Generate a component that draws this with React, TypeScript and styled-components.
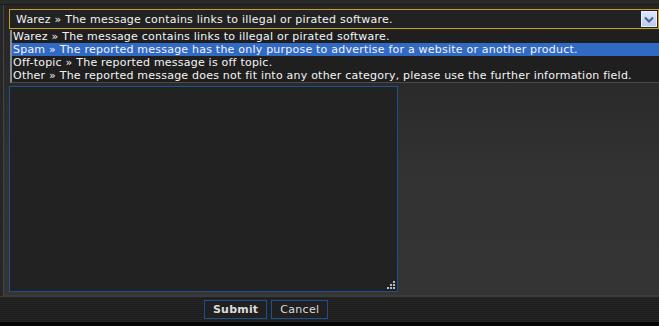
import React, { useState } from 'react';
import styled, { createGlobalStyle } from 'styled-components';

const GlobalStyle = createGlobalStyle`
  html, body {
    margin: 0;
    padding: 0;
    background: #000;
  }
  body {
    font-family: "DejaVu Sans", Verdana, sans-serif;
  }
`;

const Page = styled.div`
  width: 659px;
  height: 326px;
  display: flex;
  flex-direction: column;
  background: #000;
  overflow: hidden;
`;

const TopStrip = styled.div`
  height: 4px;
  background: #2a2a2a;
  border-bottom: 1px solid #1b1b1b;
`;

const Body = styled.div`
  flex: 1;
  display: flex;
  min-height: 0;
`;

const LeftRail = styled.div`
  width: 3px;
  background: #262626;
  border-right: 1px solid #444;
`;

const Panel = styled.div`
  flex: 1;
  position: relative;
  padding: 4px 0 0 5px;
  background: linear-gradient(180deg, #252525 0%, #2b2b2b 30%, #333 60%, #343434 100%);
  border-bottom: 1px solid #3c3c3c;
`;

const SelectBox = styled.div`
  width: 648px;
  height: 18px;
  border: 1px solid #c9a01e;
  background: #222;
  display: flex;
  align-items: center;
  justify-content: space-between;
  box-sizing: content-box;
`;

const SelectText = styled.span`
  padding-left: 6px;
  font-size: 11px;
  letter-spacing: 0.22px;
  color: #f2f2f2;
  white-space: nowrap;
`;

const ArrowButton = styled.div`
  width: 14px;
  height: 14px;
  margin-right: 1px;
  border: 1px solid #e8eefc;
  background: linear-gradient(180deg, #dfe8fb 0%, #b9cbf3 100%);
  display: flex;
  align-items: center;
  justify-content: center;
`;

const ListBox = styled.ul`
  position: absolute;
  left: 6px;
  top: 25px;
  right: 0;
  margin: 0;
  padding: 0;
  list-style: none;
  background: #1f1f1f;
  border-left: 2px solid #8a8a8a;
  border-bottom: 1px solid #4a4a4a;
  z-index: 2;
`;

const Option = styled.li<{ $active: boolean }>`
  height: 13px;
  line-height: 13px;
  padding-left: 1px;
  font-size: 11px;
  letter-spacing: 0.22px;
  white-space: nowrap;
  color: #f4f4f4;
  background: ${p => (p.$active ? '#316ac5' : 'transparent')};
`;

const TextArea = styled.div`
  position: relative;
  margin-top: 57px;
  width: 387px;
  height: 204px;
  border: 1px solid #1d4f91;
  background: #222;
`;

const Grip = styled.svg`
  position: absolute;
  right: 1px;
  bottom: 1px;
`;

const BottomBar = styled.div`
  height: 25px;
  display: flex;
  align-items: center;
  gap: 4px;
  padding-left: 204px;
  border-top: 1px solid #3a3a3a;
  background: repeating-linear-gradient(180deg, #252525 0px, #252525 1px, #1d1d1d 1px, #1d1d1d 2px);
  border-bottom: 4px solid #050505;
`;

const Button = styled.button<{ $bold?: boolean }>`
  height: 19px;
  padding: 0 8px;
  border: 1px solid #1d4f91;
  background: #202020;
  color: #dcdcdc;
  font-family: "DejaVu Sans", Verdana, sans-serif;
  font-size: 11px;
  font-weight: ${p => (p.$bold ? 700 : 400)};
  letter-spacing: ${p => (p.$bold ? '0.2px' : '0.3px')};
  cursor: pointer;
`;

const options = [
  'Warez » The message contains links to illegal or pirated software.',
  'Spam » The reported message has the only purpose to advertise for a website or another product.',
  'Off-topic » The reported message is off topic.',
  'Other » The reported message does not fit into any other category, please use the further information field.',
];

const App: React.FC = () => {
  const [active, setActive] = useState(1);

  return (
    <>
      <GlobalStyle />
      <Page>
        <TopStrip />
        <Body>
          <LeftRail />
          <Panel>
            <SelectBox>
              <SelectText>{options[0]}</SelectText>
              <ArrowButton>
                <svg width="10" height="7" viewBox="0 0 10 7">
                  <path d="M1 1.5 L5 5.5 L9 1.5" fill="none" stroke="#4d6185" strokeWidth="2" />
                </svg>
              </ArrowButton>
            </SelectBox>
            <ListBox>
              {options.map((o, i) => (
                <Option key={i} $active={active === i} onMouseEnter={() => setActive(i)}>
                  {o}
                </Option>
              ))}
            </ListBox>
            <TextArea>
              <Grip width="10" height="10" viewBox="0 0 10 10">
                <rect x="7" y="1" width="2" height="2" fill="#bbb" />
                <rect x="4" y="4" width="2" height="2" fill="#bbb" />
                <rect x="7" y="4" width="2" height="2" fill="#bbb" />
                <rect x="1" y="7" width="2" height="2" fill="#bbb" />
                <rect x="4" y="7" width="2" height="2" fill="#bbb" />
                <rect x="7" y="7" width="2" height="2" fill="#bbb" />
              </Grip>
            </TextArea>
          </Panel>
        </Body>
        <BottomBar>
          <Button $bold>Submit</Button>
          <Button>Cancel</Button>
        </BottomBar>
      </Page>
    </>
  );
};

export default App;
